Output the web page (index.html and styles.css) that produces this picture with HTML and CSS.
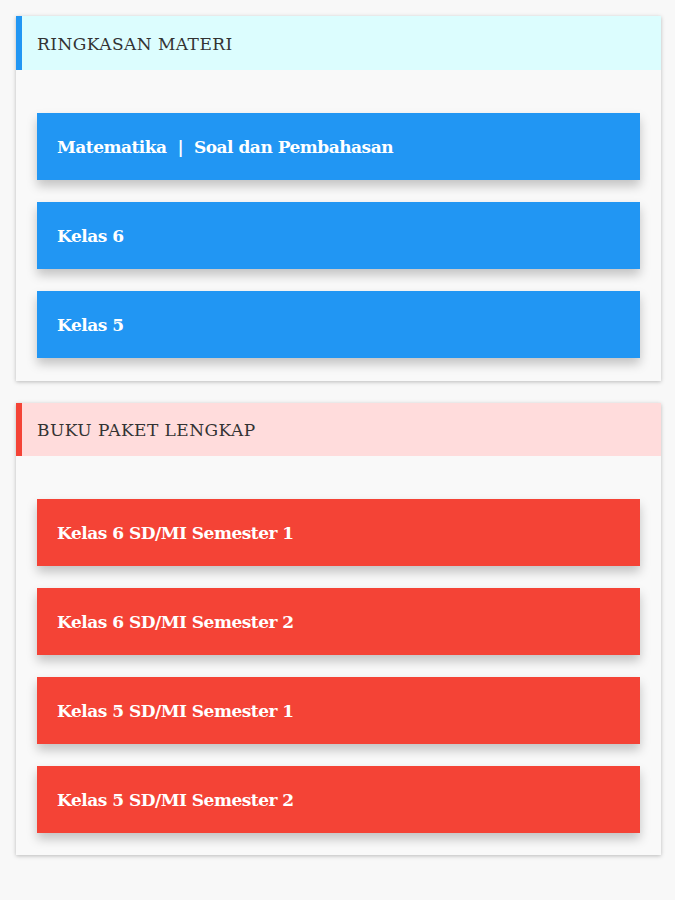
FILE: index.html
```html
<!DOCTYPE html>
<html lang="id">
<head>
  <meta charset="UTF-8">
  <title>Ringkasan Materi</title>
  <link rel="stylesheet" href="styles.css">
</head>
<body>

  <div class="card card-blue">
    <div class="card-head">RINGKASAN MATERI</div>
    <div class="card-body">
      <a class="btn" href="#">Matematika &nbsp;|&nbsp; Soal dan Pembahasan</a>
      <a class="btn" href="#">Kelas 6</a>
      <a class="btn" href="#">Kelas 5</a>
    </div>
  </div>

  <div class="card card-red">
    <div class="card-head">BUKU PAKET LENGKAP</div>
    <div class="card-body">
      <a class="btn" href="#">Kelas 6 SD/MI Semester 1</a>
      <a class="btn" href="#">Kelas 6 SD/MI Semester 2</a>
      <a class="btn" href="#">Kelas 5 SD/MI Semester 1</a>
      <a class="btn" href="#">Kelas 5 SD/MI Semester 2</a>
    </div>
  </div>

</body>
</html>
```

FILE: styles.css
```css
body { font-family: "DejaVu Serif", "Liberation Serif", serif; background: #f8f8f8; margin: 0; padding: 16px 14px 16px 16px; }
.card { background: #f9f9f9; margin-bottom: 22px; box-shadow: 0 1px 4px rgba(0,0,0,0.25); }
.card-head { height: 54px; line-height: 56px; padding-left: 15px; font-size: 17px; color: #333; letter-spacing: 0.45px; border-left: 6px solid #2196f3; background: #dcfdfe; }
.card-red .card-head { height: 53px; line-height: 54px; border-left-color: #f44336; background: #ffdcdc; }
.card-body { display: flex; flex-direction: column; gap: 22px; padding: 43px 21px 23px 21px; }
.card-red .card-body { padding-bottom: 22px; }
.btn { display: block; height: 67px; line-height: 68px; padding-left: 20px; color: #fff; text-decoration: none; font-size: 17px; font-weight: bold; letter-spacing: -0.5px; background: #2196f3; box-shadow: 0 6px 10px rgba(0,0,0,0.22); }
.card-red .btn { background: #f44336; }
```
